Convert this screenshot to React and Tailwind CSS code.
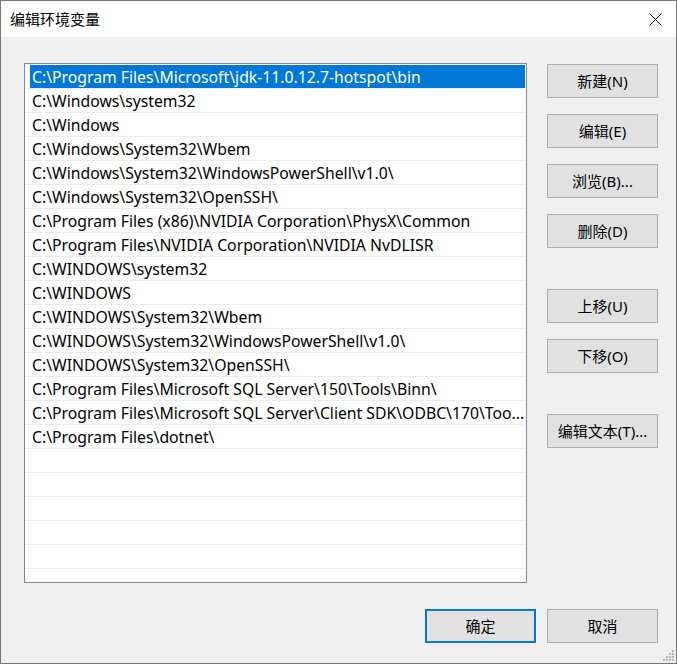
import { useState } from "react";

const paths = [
  "C:\\Program Files\\Microsoft\\jdk-11.0.12.7-hotspot\\bin",
  "C:\\Windows\\system32",
  "C:\\Windows",
  "C:\\Windows\\System32\\Wbem",
  "C:\\Windows\\System32\\WindowsPowerShell\\v1.0\\",
  "C:\\Windows\\System32\\OpenSSH\\",
  "C:\\Program Files (x86)\\NVIDIA Corporation\\PhysX\\Common",
  "C:\\Program Files\\NVIDIA Corporation\\NVIDIA NvDLISR",
  "C:\\WINDOWS\\system32",
  "C:\\WINDOWS",
  "C:\\WINDOWS\\System32\\Wbem",
  "C:\\WINDOWS\\System32\\WindowsPowerShell\\v1.0\\",
  "C:\\WINDOWS\\System32\\OpenSSH\\",
  "C:\\Program Files\\Microsoft SQL Server\\150\\Tools\\Binn\\",
  "C:\\Program Files\\Microsoft SQL Server\\Client SDK\\ODBC\\170\\Too...",
  "C:\\Program Files\\dotnet\\",
];

const font = { fontFamily: '"Noto Sans", "Noto Sans CJK SC", sans-serif' };

const Button = ({ children, primary, className = "" }) => (
  <button
    className={`h-[34px] w-[111px] bg-[#e1e1e1] text-[15px] text-black flex items-center justify-center ${
      primary ? "border-2 border-[#0078d7]" : "border border-[#adadad]"
    } ${className}`}
  >
    {children}
  </button>
);

const EditEnvDialog = () => {
  const [selected, setSelected] = useState(0);
  const rows = [...paths, ...Array(7).fill("")];

  return (
    <div
      className="w-[677px] h-[664px] border border-[#777777] flex flex-col bg-[#f0f0f0] relative overflow-hidden"
      style={font}
    >
      {/* Title bar */}
      <div className="h-[36px] bg-white flex items-center justify-between pl-[9px] pr-[14px] shrink-0">
        <span className="text-[15px] text-black">编辑环境变量</span>
        <svg width="13" height="13" viewBox="0 0 13 13" className="mt-[1px]">
          <path d="M0.5 0.5 L12.5 12.5 M12.5 0.5 L0.5 12.5" stroke="#111" strokeWidth="1" />
        </svg>
      </div>

      {/* Body */}
      <div className="flex-1 flex flex-col pl-[23px] pr-[18px] pt-[26px]">
        <div className="flex">
          {/* List */}
          <div className="w-[504px] h-[520px] border border-[#828790] bg-white overflow-hidden px-[1px] pt-[1px]">
            {rows.map((p, i) => (
              <div
                key={i}
                onClick={() => p && setSelected(i)}
                className="h-[24px] border-b border-[#ececec] flex"
              >
                <div
                  className={`flex-1 ml-[4px] pl-[2px] pt-[2px] flex items-center text-[15.75px] whitespace-nowrap overflow-hidden ${
                    selected === i ? "bg-[#0078d7] text-white" : "text-black"
                  }`}
                >
                  {p}
                </div>
              </div>
            ))}
          </div>

          {/* Side buttons */}
          <div className="ml-[20px] pt-[1px] flex flex-col">
            <Button>新建(N)</Button>
            <Button className="mt-[16px]">编辑(E)</Button>
            <Button className="mt-[16px]">浏览(B)...</Button>
            <Button className="mt-[16px]">删除(D)</Button>
            <Button className="mt-[41px]">上移(U)</Button>
            <Button className="mt-[16px]">下移(O)</Button>
            <Button className="mt-[41px]">编辑文本(T)...</Button>
          </div>
        </div>

        {/* Bottom buttons */}
        <div className="mt-[26px] flex justify-end gap-[11px]">
          <Button primary>确定</Button>
          <Button>取消</Button>
        </div>
      </div>

      {/* Resize grip */}
      <svg width="12" height="12" viewBox="0 0 12 12" className="absolute right-[1px] bottom-[1px]">
        {[
          [9, 0],
          [6, 3],
          [9, 3],
          [3, 6],
          [6, 6],
          [9, 6],
          [0, 9],
          [3, 9],
          [6, 9],
          [9, 9],
        ].map(([x, y]) => (
          <rect key={`${x}-${y}`} x={x} y={y} width="2" height="2" fill="#b8b8b8" />
        ))}
      </svg>
    </div>
  );
};

export default EditEnvDialog;
